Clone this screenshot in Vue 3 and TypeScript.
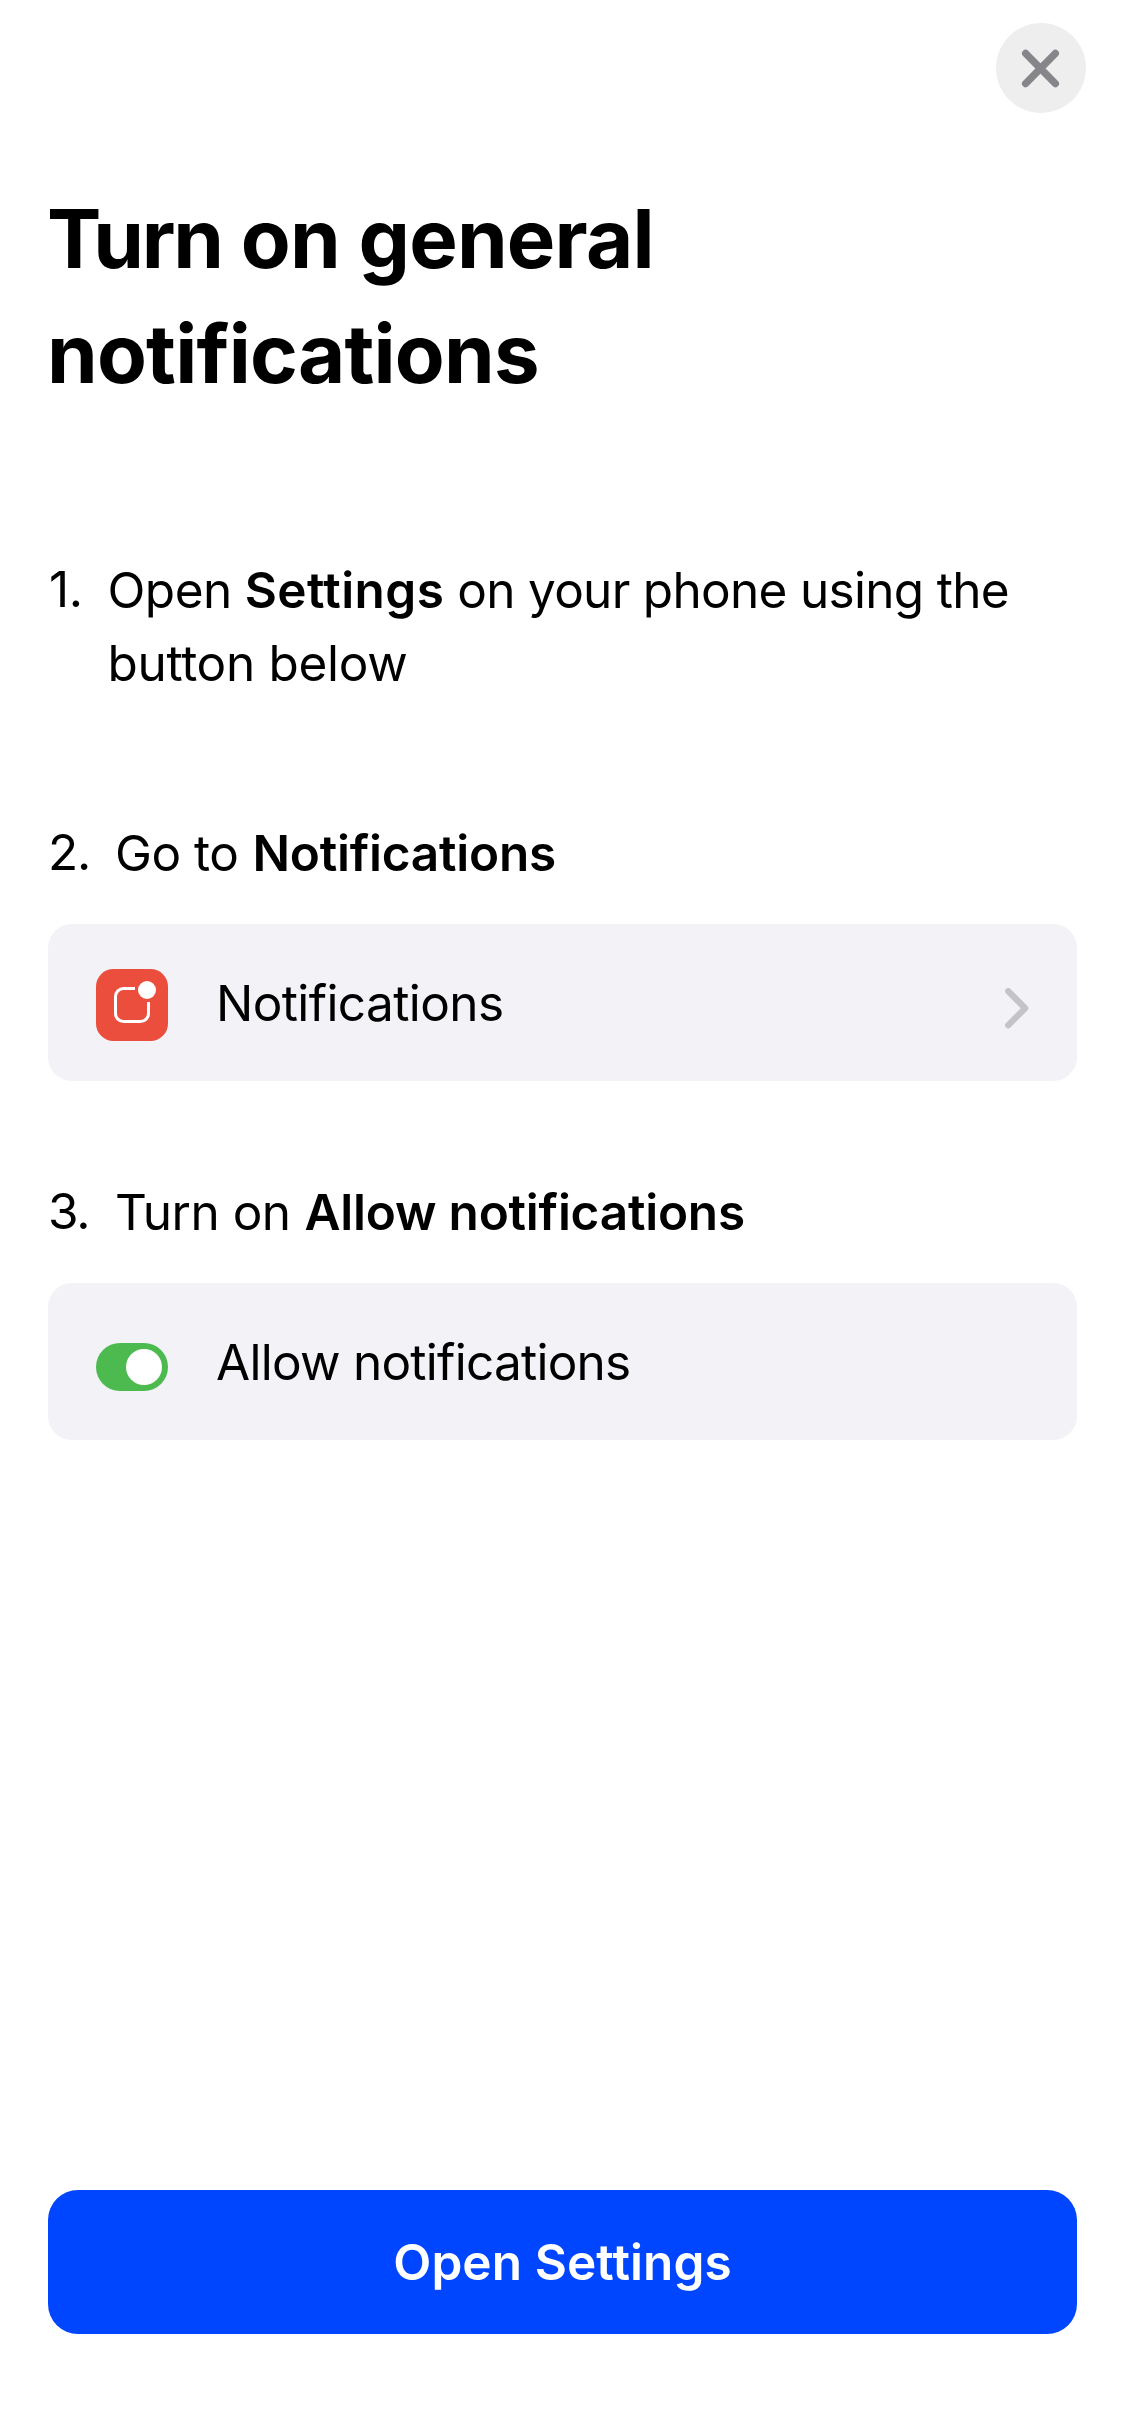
<script setup lang="ts">
interface Step {
  id: number
  lead: string
  strong: string
  tail?: string
  rest?: string
  card?: { kind: 'link' | 'toggle'; label: string }
}

const steps: Step[] = [
  { id: 1, lead: 'Open', strong: 'Settings', tail: 'on your phone using the', rest: 'button below' },
  { id: 2, lead: 'Go to', strong: 'Notifications', card: { kind: 'link', label: 'Notifications' } },
  { id: 3, lead: 'Turn on', strong: 'Allow notifications', card: { kind: 'toggle', label: 'Allow notifications' } },
]
</script>

<template>
  <main class="sheet">
    <header class="topbar">
      <button class="close" type="button" aria-label="Close">
        <svg width="90" height="90" viewBox="0 0 90 90" fill="none">
          <path d="M29.700 30.500 59.300 60.500M59.300 30.500 29.700 60.500" stroke="#85858a" stroke-width="7.400" stroke-linecap="round" />
        </svg>
      </button>
    </header>

    <h1 class="title">
      <span class="title-row"><span class="turn">Turn</span><span>on general</span></span>
      <span class="title-row">notifications</span>
    </h1>

    <section v-for="step in steps" :key="step.id" class="step" :class="`step-${step.id}`">
      <div class="line">
        <span class="num">{{ step.id }}.</span>
        <div class="text">
          <p class="row">
            <span>{{ step.lead }}</span>
            <strong>{{ step.strong }}</strong>
            <span v-if="step.tail" class="tail">{{ step.tail }}</span>
          </p>
          <p v-if="step.rest" class="row rest">{{ step.rest }}</p>
        </div>
      </div>

      <div v-if="step.card" class="card" :class="step.card.kind">
        <svg v-if="step.card.kind === 'link'" class="icon" width="72" height="72" viewBox="0 0 72 72" fill="none">
          <rect width="72" height="72" rx="17.5" fill="#eb4e3d" />
          <path d="M39 19.500H27.500A8 8 0 0 0 19.500 27.500V44.500A8 8 0 0 0 27.500 52.500H44.500A8 8 0 0 0 52.500 44.500V33" stroke="#fff" stroke-width="3" />
          <circle cx="51" cy="21" r="9" fill="#fff" />
        </svg>
        <svg v-else class="icon" width="72" height="48" viewBox="0 0 72 48">
          <rect width="72" height="48" rx="24" fill="#4dba4f" />
          <circle cx="48" cy="24" r="18" fill="#fff" />
        </svg>
        <span class="label">{{ step.card.label }}</span>
        <svg v-if="step.card.kind === 'link'" class="chevron" width="24" height="41" viewBox="0 0 24 41" fill="none">
          <path d="M3.200 3.200 20.200 20.200 3.200 37.200" stroke="#c4c4c6" stroke-width="6.200" stroke-linecap="round" stroke-linejoin="round" />
        </svg>
      </div>
    </section>

    <button class="primary" type="button"><span>Open Settings</span></button>
  </main>
</template>

<style>
body {
  margin: 0;
  background: #fff;
}
</style>

<style scoped>
.sheet {
  box-sizing: border-box;
  width: 1125px;
  height: 2436px;
  padding: 23px 48px 102px;
  display: flex;
  flex-direction: column;
  background: #fff;
  color: #000;
  font-family: Inter, "Liberation Sans", sans-serif;
  font-size: 49.5px;
  line-height: 73px;
}
button {
  border: 0;
  padding: 0;
  font-family: inherit;
}
.topbar {
  display: flex;
  justify-content: flex-end;
  margin-right: -9px;
}
.close {
  width: 90px;
  height: 90px;
  border-radius: 50%;
  background: #eeeeef;
}
.close svg {
  display: block;
}
.title {
  margin: 68px 0 143px -1px;
  font-size: 81.5px;
  line-height: 115px;
  font-weight: 700;
  letter-spacing: -0.8px;
}
.title-row {
  display: flex;
  gap: 19px;
  white-space: nowrap;
}
.turn {
  letter-spacing: -2.2px;
}
.line {
  display: flex;
}
.num {
  flex: none;
  width: 67px;
  margin-top: -1px;
  letter-spacing: -1.2px;
}
.step-1 .num {
  box-sizing: border-box;
  width: 59.5px;
  padding-left: 1px;
  letter-spacing: -0.5px;
}
.row {
  display: flex;
  gap: 14px;
  margin: 0;
  white-space: nowrap;
  letter-spacing: -0.5px;
}
.row strong {
  font-weight: 600;
  letter-spacing: -0.22px;
}
.step-1 .row {
  gap: 13px;
}
.step-1 strong {
  letter-spacing: 0.4px;
}
.tail {
  letter-spacing: -0.7px;
}
.rest {
  letter-spacing: -0.3px;
}
.step-2 {
  margin-top: 116px;
}
.step-3 {
  margin-top: 94px;
}
.step-2 .line,
.step-3 .line {
  padding-top: 1px;
}
.step-2 .num,
.step-3 .num {
  margin-top: -1.5px;
}
.card {
  box-sizing: border-box;
  height: 157px;
  margin-top: 34px;
  padding: 0 48px;
  border-radius: 24px;
  background: #f2f2f7;
  display: flex;
  align-items: center;
}
.label {
  margin: 1px 0 0 48px;
  letter-spacing: -0.6px;
}
.toggle .label {
  letter-spacing: -0.74px;
}
.link .icon {
  margin-top: 5px;
}
.toggle .icon {
  margin-top: 11px;
}
.chevron {
  margin: 11px 0 0 auto;
}
.primary {
  height: 144px;
  margin-top: auto;
  border-radius: 30px;
  background: #0045ff;
  color: #fff;
  font-size: 49.5px;
  line-height: 73px;
  font-weight: 600;
  letter-spacing: 0.1px;
}
</style>
